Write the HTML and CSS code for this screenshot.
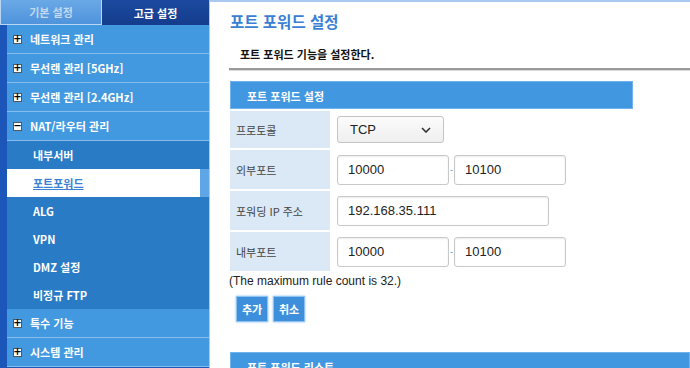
FILE: index.html
```html
<!DOCTYPE html>
<html lang="ko">
<head>
<meta charset="utf-8">
<title>포트 포워드 설정</title>
<link rel="stylesheet" href="styles.css">
</head>
<body>
<div class="page">
  <aside class="sidebar">
    <div class="tabs">
      <div class="tab tab-basic">기본 설정</div>
      <div class="tab tab-adv">고급 설정</div>
    </div>
    <ul class="menu">
      <li class="main"><span class="box">+</span>네트워크 관리</li>
      <li class="main"><span class="box">+</span>무선랜 관리 [5GHz]</li>
      <li class="main"><span class="box">+</span>무선랜 관리 [2.4GHz]</li>
      <li class="main"><span class="box">−</span>NAT/라우터 관리</li>
      <li class="sub">내부서버</li>
      <li class="sub active"><span class="active-text">포트포워드</span><span class="active-edge"></span></li>
      <li class="sub">ALG</li>
      <li class="sub">VPN</li>
      <li class="sub">DMZ 설정</li>
      <li class="sub">비정규 FTP</li>
      <li class="main"><span class="box">+</span>특수 기능</li>
      <li class="main"><span class="box">+</span>시스템 관리</li>
    </ul>
  </aside>
  <main class="content">
    <h1 class="title">포트 포워드 설정</h1>
    <p class="desc">포트 포워드 기능을 설정한다.</p>
    <div class="rule"></div>
    <section class="panel">
      <div class="bar">포트 포워드 설정</div>
      <div class="row row-first">
        <div class="label">프로토콜</div>
        <div class="value">
          <div class="select">TCP
            <svg class="chev" width="10" height="6" viewBox="0 0 10 6"><path d="M1 1 L5 5 L9 1" fill="none" stroke="#333" stroke-width="1.6"/></svg>
          </div>
        </div>
      </div>
      <div class="row">
        <div class="label">외부포트</div>
        <div class="value">
          <div class="input small">10000</div><span class="dash">-</span><div class="input small">10100</div>
        </div>
      </div>
      <div class="row">
        <div class="label">포워딩 IP 주소</div>
        <div class="value">
          <div class="input wide">192.168.35.111</div>
        </div>
      </div>
      <div class="row">
        <div class="label">내부포트</div>
        <div class="value">
          <div class="input small">10000</div><span class="dash">-</span><div class="input small">10100</div>
        </div>
      </div>
    </section>
    <p class="note">(The maximum rule count is 32.)</p>
    <div class="buttons">
      <button class="btn">추가</button>
      <button class="btn">취소</button>
    </div>
    <div class="bar bar-list">포트 포워드 리스트</div>
  </main>
</div>
</body>
</html>
```

FILE: styles.css
```css
html, body {
  margin: 0;
  padding: 0;
  background: #ffffff;
  overflow: hidden;
}
body {
  width: 690px;
  height: 368px;
  font-family: "Noto Sans CJK KR", "Liberation Sans", sans-serif;
}
.page {
  display: flex;
  align-items: flex-start;
  height: 368px;
}
.sidebar {
  width: 209px;
  flex: none;
  height: 400px;
  background: #1b56b8;
  border-right: 1px solid #a9cdf2;
}
.tabs {
  display: flex;
  height: 25px;
}
.tab {
  display: flex;
  align-items: center;
  justify-content: center;
  font-size: 11px;
  font-weight: bold;
  box-sizing: border-box;
}
.tab-basic {
  width: 102px;
  color: #c3d9f1;
  background: linear-gradient(#6aa9e6, #4f93dc);
  border: 1px solid #b9d6f3;
  border-top: none;
}
.tab-adv {
  width: 107px;
  color: #ffffff;
  background: linear-gradient(#1c4aa0, #143c8c);
}
.menu {
  list-style: none;
  margin: 0 0 0 7px;
  padding: 0;
}
.menu li {
  display: flex;
  align-items: center;
  color: #ffffff;
  font-size: 11px;
  font-weight: bold;
  box-sizing: border-box;
}
.main {
  height: 29px;
  background: #4299e0;
  border-bottom: 1px solid #86bdec;
  padding-left: 6px;
}
.box {
  width: 9px;
  height: 9px;
  box-sizing: border-box;
  background: #ffffff;
  border: 1px solid #555;
  color: #000;
  font-family: "DejaVu Sans", sans-serif;
  font-size: 10px;
  line-height: 6px;
  display: flex;
  align-items: center;
  justify-content: center;
  margin-right: 8px;
  font-weight: bold;
}
.sub {
  height: 28px;
  background: #2a7bc5;
  padding-left: 26px;
}
.menu li.active {
  background: #ffffff;
  padding-left: 0;
  justify-content: space-between;
}
.active-text {
  padding-left: 26px;
  color: #3b7fd2;
  text-decoration: underline;
}
.active-edge {
  width: 9px;
  height: 28px;
  background: #5ea6e6;
}
.content {
  flex: 1;
  height: 368px;
  border-top: 2px solid #a9c9f1;
  box-sizing: border-box;
  padding-left: 19px;
}
.title {
  margin: 9px 0 0 1px;
  font-size: 15.5px;
  line-height: 20px;
  color: #3b7fd4;
  font-weight: bold;
}
.desc {
  margin: 15px 0 0 11px;
  font-size: 11px;
  line-height: 16px;
  font-weight: bold;
  color: #111;
}
.rule {
  margin-top: 6px;
  height: 2px;
  background: #9a9a9a;
  border-bottom: 1px solid #d8d8d8;
}
.panel {
  margin-top: 10px;
  margin-left: 1px;
  width: 403px;
}
.bar {
  height: 28px;
  background: #4298e0;
  color: #ffffff;
  font-size: 11px;
  font-weight: bold;
  line-height: 28px;
  padding-left: 16px;
  box-sizing: border-box;
  border: 1px solid #6fb2ec;
}
.row {
  display: flex;
  height: 39px;
  margin-top: 2px;
}
.row-first {
  height: 37px;
}
.label {
  width: 100px;
  background: #dbe8f5;
  display: flex;
  align-items: center;
  padding-left: 6px;
  box-sizing: border-box;
  font-size: 11px;
  color: #444;
}
.value {
  flex: 1;
  display: flex;
  align-items: center;
  padding-left: 7px;
}
.select {
  width: 107px;
  height: 27px;
  box-sizing: border-box;
  border: 1px solid #c4c4c4;
  border-radius: 3px;
  background: linear-gradient(#fbfbfb, #efefef);
  display: flex;
  align-items: center;
  justify-content: space-between;
  padding: 0 12px 0 12px;
  font-family: "Liberation Sans", sans-serif;
  font-size: 13px;
  color: #222;
}
.input {
  height: 30px;
  box-sizing: border-box;
  border: 1px solid #c8c8c8;
  border-radius: 3px;
  box-shadow: inset 0 1px 2px rgba(0,0,0,0.08);
  display: flex;
  align-items: center;
  padding-left: 10px;
  font-family: "Liberation Sans", sans-serif;
  font-size: 13px;
  color: #222;
  background: #fff;
}
.small {
  width: 112px;
}
.wide {
  width: 212px;
}
.dash {
  width: 5px;
  text-align: center;
  color: #4a8ad6;
  font-size: 9px;
  font-family: "Liberation Sans", sans-serif;
}
.note {
  margin: 2px 0 0 0;
  font-family: "Liberation Sans", sans-serif;
  font-size: 12px;
  line-height: 16px;
  color: #222;
}
.buttons {
  display: flex;
  gap: 5px;
  margin: 7px 0 0 7px;
}
.btn {
  width: 32px;
  height: 26px;
  padding: 0;
  border: 1px solid #8ec3f0;
  background: #3d8fdc;
  box-shadow: 0 0 2px #7fb9ec;
  color: #ffffff;
  font-family: "Noto Sans CJK KR", sans-serif;
  font-size: 11px;
  font-weight: bold;
}
.bar-list {
  margin-top: 30px;
  margin-left: 1px;
}
```
